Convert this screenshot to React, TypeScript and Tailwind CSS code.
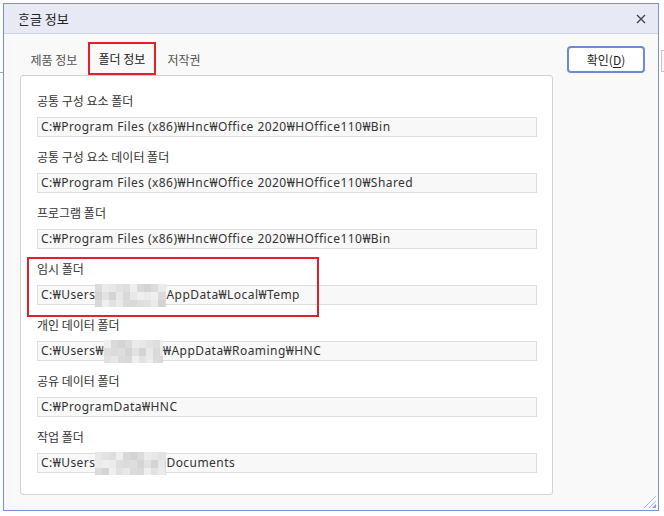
import React from "react";

const rows: { label: string; parts: (string | { blur: number; seed: number })[] }[] = [
  { label: "공통 구성 요소 폴더", parts: ["C:₩Program Files (x86)₩Hnc₩Office 2020₩HOffice110₩Bin"] },
  { label: "공통 구성 요소 데이터 폴더", parts: ["C:₩Program Files (x86)₩Hnc₩Office 2020₩HOffice110₩Shared"] },
  { label: "프로그램 폴더", parts: ["C:₩Program Files (x86)₩Hnc₩Office 2020₩HOffice110₩Bin"] },
  { label: "임시 폴더", parts: ["C:₩Users", { blur: 71, seed: 1 }, "AppData₩Local₩Temp"] },
  { label: "개인 데이터 폴더", parts: ["C:₩Users₩", { blur: 59, seed: 2 }, "₩AppData₩Roaming₩HNC"] },
  { label: "공유 데이터 폴더", parts: ["C:₩ProgramData₩HNC"] },
  { label: "작업 폴더", parts: ["C:₩Users", { blur: 71, seed: 3 }, "Documents"] },
];

const grays = ["#e2e2e2", "#d9d9d9", "#ebebeb", "#dedede", "#d4d4d4", "#e8e8e8", "#efefef", "#dbdbdb"];

function Mosaic({ width, seed }: { width: number; seed: number }) {
  const cols = Math.ceil(width / 7);
  const cells: string[] = [];
  for (let r = 0; r < 3; r++) {
    for (let c = 0; c < cols; c++) {
      cells.push(grays[(c * 3 + r * 5 + seed * 7 + ((c * r) % 3)) % grays.length]);
    }
  }
  return (
    <span
      className="inline-grid shrink-0 h-[23px] overflow-hidden"
      style={{ width, gridTemplateColumns: `repeat(${cols}, 7px)`, gridTemplateRows: "repeat(3, 8px)" }}
    >
      {cells.map((g, i) => (
        <span key={i} style={{ background: g }} />
      ))}
    </span>
  );
}

export default function App() {
  return (
    <div className="relative w-[664px] h-[516px] bg-white overflow-hidden font-['Noto_Sans_CJK_KR','Malgun_Gothic',sans-serif] text-[12px] text-[#222]">
      <div className="absolute left-0 top-[72px] w-[3px] h-px bg-[#a8a8a8]" />
      <div className="absolute left-[661px] top-[50px] w-[4px] h-[22px] border border-[#c8c8c8] bg-[#f7f7f7]" />

      <div className="ml-[3px] pt-[3px]">
        <div className="w-[656px] h-[508px] border border-[#7394d6] bg-[#f9f9f9] flex flex-col">
          <div className="h-[30px] shrink-0 bg-[#e7e9f5] border-b border-[#cfd4e6] flex items-center justify-between pl-[14px] pr-[12px]">
            <span className="text-[13px] text-[#222]">{"\u1112\u119e\u11ab"}글 정보</span>
            <svg width="10" height="10" viewBox="0 0 10 10" className="mt-px">
              <path d="M1 1L9 9M9 1L1 9" stroke="#444" strokeWidth="1.3" />
            </svg>
          </div>

          <div className="flex flex-1 pl-[16px] pt-[8px] pb-[15px]">
            <div className="flex flex-col w-[533px]">
              <div className="flex items-stretch h-[33px]">
                <div className="w-[68px] flex items-center justify-center text-[#555] pt-[2px]">제품 정보</div>
                <div className="w-px h-[12px] self-center bg-[#d8d8d8] -mr-px" />
                <div className="w-[68px] border-2 border-[#e3202a] flex items-center justify-center text-[#222] pt-[1px]">폴더 정보</div>
                <div className="w-[56px] flex items-center justify-center text-[#555] pt-[2px]">저작권</div>
              </div>
              <div className="relative flex-1 bg-white border border-[#d2d2d2] rounded-[3px] pl-[16px] pr-[15px] pt-[17px]">
                {rows.map((r, i) => (
                  <div key={i} className="flex flex-col">
                    <div className="h-[16px] leading-[16px] text-[#333]">{r.label}</div>
                    <div className="mt-[8px] mb-[12px] h-[20px] bg-[#f8f8f8] border border-[#dddddd] flex items-center pl-[3px] whitespace-nowrap text-[#333] tracking-[0.45px] font-['Noto_Sans','Noto_Sans_CJK_KR',sans-serif]">
                      {r.parts.map((p, j) =>
                        typeof p === "string" ? (
                          <span key={j}>{p}</span>
                        ) : (
                          <Mosaic key={j} width={p.blur} seed={p.seed} />
                        )
                      )}
                    </div>
                  </div>
                ))}
                <div className="absolute left-[6px] top-[181px] w-[292px] h-[60px] border-2 border-[#e3202a]" />
              </div>
            </div>
            <div className="ml-[14px] mt-[4px]">
              <button className="w-[78px] h-[27px] border-2 border-[#6b8bd6] rounded-[4px] bg-white flex items-center justify-center text-[12px] text-[#222]">
                확인(<span className="underline underline-offset-2">D</span>)
              </button>
            </div>
          </div>
        </div>
      </div>

      <svg className="absolute left-[643px] top-[495px]" width="14" height="14" viewBox="0 0 14 14">
        <path d="M1 13L13 1M6 13L13 6" stroke="#a9b8dc" strokeWidth="1" />
        <path d="M9 13L13 9L13 13Z" fill="#8ea3d3" />
      </svg>
    </div>
  );
}
